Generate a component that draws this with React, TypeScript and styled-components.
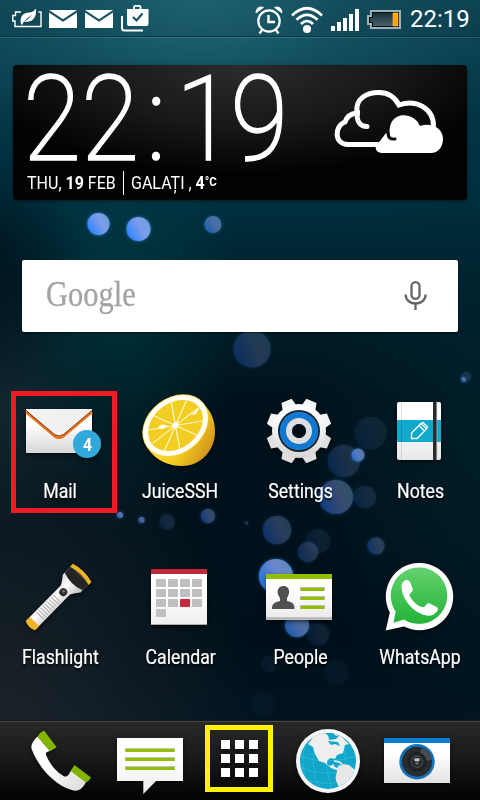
import React from "react";
import styled, { createGlobalStyle } from "styled-components";

const GlobalStyle = createGlobalStyle`
  html, body { margin: 0; padding: 0; background: #00131d; }
  * { box-sizing: border-box; }
  svg { display: block; overflow: visible; }
`;

const Screen = styled.div`
  position: relative;
  width: 480px;
  height: 800px;
  overflow: hidden;
  display: flex;
  flex-direction: column;
  color: #fff;
  font-family: Roboto, "Liberation Sans", sans-serif;
  background:
    radial-gradient(ellipse 330px 190px at 200px -10px, rgba(40, 120, 137, 0.8), rgba(30, 100, 116, 0.42) 50%, transparent),
    radial-gradient(ellipse 280px 400px at -20px 770px, rgba(42, 44, 48, 0.75), transparent),
    radial-gradient(ellipse 120px 130px at -30px 275px, rgba(0, 15, 25, 0.9), transparent),
    radial-gradient(ellipse 120px 230px at 120px 300px, rgba(0, 66, 72, 0.55), transparent),
    radial-gradient(ellipse 110px 130px at 0 400px, rgba(36, 58, 66, 0.5), transparent),
    radial-gradient(ellipse 200px 320px at 500px 420px, rgba(0, 40, 50, 0.6), transparent),
    linear-gradient(180deg, #0c4655 0, #043443 120px, #00303f 200px, #00202c 290px, #00121c 400px, #00101a 640px, #021420 720px);
`;

const Backdrop = styled.svg`
  position: absolute;
  inset: 0;
`;

const StatusBar = styled.header`
  position: relative;
  height: 37px;
  flex: none;
  display: flex;
  align-items: center;
  padding: 0 10px 0 12px;
  background: rgba(10, 35, 50, 0.16);
  border-bottom: 1px solid rgba(0, 30, 42, 0.45);
  box-shadow: 0 1px 0 rgba(120, 180, 190, 0.25);
`;

const StatusGroup = styled.div<{ $gap: number }>`
  display: flex;
  align-items: center;
  gap: ${(p) => p.$gap}px;
`;

const StatusTime = styled.time`
  font-size: 24px;
  line-height: 37px;
  width: 60px;
  margin: 3px 0 0 1px;
`;

const Spacer = styled.div`
  flex: 1;
`;

const ClockWidget = styled.section`
  position: relative;
  flex: none;
  display: flex;
  justify-content: space-between;
  height: 135px;
  margin: 28px 13px 0;
  padding: 0 24px 0 14px;
  border-radius: 4px;
  background:
    radial-gradient(ellipse 270px 110px at 50% 0, rgba(48, 48, 48, 0.9), rgba(34, 34, 34, 0.7) 55%, transparent),
    #020202;
  box-shadow: 0 1px 3px rgba(0, 0, 0, 0.5);
`;

const ClockColumn = styled.div`
  display: flex;
  flex-direction: column;
`;

const CloudSlot = styled.div`
  padding-top: 25px;
`;

const Digits = styled.div`
  display: flex;
  width: 280px;
  height: 105px;
  font-size: 118px;
  line-height: 110px;
  font-weight: 200;
  -webkit-text-stroke: 1.4px #fff;
  transform: scaleX(0.895);
  transform-origin: 0 50%;
`;

const Digit = styled.span<{ $shift: number }>`
  margin-left: ${(p) => p.$shift}px;
`;

const DateLine = styled.div`
  display: flex;
  align-items: center;
  height: 25px;
  font-size: 18px;
  white-space: nowrap;
`;

const DatePart = styled.span<{ $width: number; $scale: number }>`
  width: ${(p) => p.$width}px;
  transform: scaleX(${(p) => p.$scale});
  transform-origin: 0 50%;
`;

const Divider = styled.i`
  width: 1px;
  height: 24px;
  margin-right: 7px;
  background: #fff;
`;

const Unit = styled.small`
  font-size: 13px;
  font-weight: 700;
  vertical-align: 3px;
`;

const SearchBar = styled.section`
  position: relative;
  flex: none;
  display: flex;
  align-items: center;
  justify-content: space-between;
  height: 72px;
  margin: 60px 22px 0;
  padding: 0 30px 0 23px;
  border-radius: 2px;
  background: #fff;
  box-shadow: 0 1px 2px rgba(0, 0, 0, 0.6);
`;

const Wordmark = styled.span`
  font-family: "Liberation Serif", serif;
  font-size: 35px;
  line-height: 40px;
  color: #a3a3a3;
  -webkit-text-stroke: 0.3px #a3a3a3;
  margin: -2px 0 0 1px;
  transform: scaleX(0.87);
  transform-origin: 0 50%;
`;

const AppGrid = styled.main`
  position: relative;
  flex: none;
  display: grid;
  grid-template-columns: repeat(4, 120px);
  grid-template-rows: 166px 163px;
  margin-top: 59px;
`;

const AppCell = styled.div`
  position: relative;
  display: flex;
  flex-direction: column;
  align-items: center;
`;

const AppIcon = styled.svg`
  width: 80px;
  height: 80px;
  flex: none;
  filter: drop-shadow(0 2px 2px rgba(0, 0, 0, 0.55));
`;

const AppLabel = styled.span`
  margin: 8px 0 0 1px;
  font-size: 20px;
  line-height: 24px;
  white-space: nowrap;
  transform: scaleX(0.885);
  -webkit-text-stroke: 0.2px #fff;
  text-shadow: 0 2px 2px rgba(0, 0, 0, 0.8);
`;

const Marker = styled.i<{ $color: string; $inset: string }>`
  position: absolute;
  inset: ${(p) => p.$inset};
  border: 5px solid ${(p) => p.$color};
`;

const Dock = styled.footer`
  position: relative;
  flex: none;
  height: 80px;
  display: grid;
  grid-template-columns: repeat(5, 89px);
  padding-left: 15.5px;
  background: linear-gradient(#292929, #1b1b1b 45%, #050505 95%);
  box-shadow: inset 0 1px 0 #181818, inset 0 2px 0 #484545;
`;

type Dot = [x: number, y: number, r: number, opacity: number];

const dots: Dot[] = [
  [98.5, 224, 11, 1], [138.5, 229, 12, 1], [213, 224.5, 8.5, 0.6],
  [252, 349, 18.5, 0.32], [466, 377, 5, 0.22], [463.5, 379.5, 2.4, 0.6],
  [370.5, 433, 16, 0.14], [344, 461, 16, 0.26], [358, 455, 6.5, 0.72],
  [336, 497, 17, 0.52], [365, 497, 11, 0.2], [120, 515, 3, 0.7],
  [141.5, 520, 3, 0.6], [167, 522, 7.5, 0.2], [208, 516, 7, 0.5],
  [246.5, 523, 1.5, 0.4], [277, 530, 14, 0.4], [318, 541, 12, 0.13],
  [308, 552, 10, 0.32], [376, 546, 8.5, 0.38], [276, 576, 17, 0.85],
  [297, 625, 12, 0.65], [318, 634, 11, 0.15], [269, 664, 8, 0.08],
  [336, 672, 12, 0.06], [262, 704, 12, 0.04],
];

const Bokeh = () => (
  <Backdrop width="480" height="800" viewBox="0 0 480 800">
    <defs>
      <linearGradient id="dot" x1="0" y1="0.8" x2="1" y2="0.2">
        <stop offset="0" stopColor="#2484ff" />
        <stop offset="0.6" stopColor="#809bea" />
        <stop offset="1" stopColor="#68a2d8" />
      </linearGradient>
      <linearGradient id="dimDot" x1="0" y1="0.7" x2="1" y2="0.3">
        <stop offset="0" stopColor="#1c62e0" />
        <stop offset="0.6" stopColor="#6d80bd" />
        <stop offset="1" stopColor="#5c87a8" />
      </linearGradient>
      <filter id="glow" x="-50%" y="-50%" width="200%" height="200%">
        <feGaussianBlur stdDeviation="1.8" />
      </filter>
    </defs>
    {dots.map(([x, y, r, o]) => (
      <g key={`${x}-${y}`} opacity={o}>
        <circle cx={x} cy={y} r={r + 0.5} fill="#2d79d8" opacity="0.7" filter="url(#glow)" />
        <circle cx={x} cy={y} r={r} fill={o < 0.55 ? "url(#dimDot)" : "url(#dot)"} />
      </g>
    ))}
  </Backdrop>
);

const PaperGradient = ({ id, to = "#dcdcdc" }: { id: string; to?: string }) => (
  <linearGradient id={id} x1="0" y1="0" x2="0" y2="1">
    <stop offset="0.35" stopColor="#fff" />
    <stop offset="1" stopColor={to} />
  </linearGradient>
);

const PowerSaver = () => (
  <svg width="29" height="20" viewBox="0 0 29 20">
    <path d="M9 4H3.500v3.500H.8v5.500H3V18.500h26V4h-2.500" fill="none" stroke="#fff" strokeWidth="1.400" />
    <path d="M9 16.500c-2-8.500 3-12 8-12 3 0 5-1.500 7-4 1 8-3 15-12 13 4-2 6-4 8-7-4 4-8 5-9.500 10z" fill="#fff" />
  </svg>
);

const Envelope = () => (
  <svg width="28" height="18" viewBox="0 0 28 18">
    <g transform="translate(0 1)" fill="#fff">
      <path d="M0 0h28L14 9.300z" />
      <path d="M0 2.400 14 11.700 28 2.400V18H0z" />
    </g>
  </svg>
);

const UpdatedApps = () => (
  <svg width="28" height="27" viewBox="0 0 28 27">
    <path d="M1 11v12q0 2.500 2.500 2.500H22" fill="none" stroke="#fff" strokeWidth="2" />
    <path d="M13 4V2q0-1.200 1.200-1.200h4Q19.500.8 19.500 2v2" fill="none" stroke="#fff" strokeWidth="1.800" />
    <path d="M6 4h21.500v15q0 2-2 2H8q-2 0-2-2z" fill="#fff" />
    <path d="m12 12 3.500 3.500 6-7" fill="none" stroke="#1c5264" strokeWidth="2.200" />
  </svg>
);

const Alarm = () => (
  <svg width="28" height="28" viewBox="0 0 28 28" fill="none" stroke="#fff">
    <g transform="translate(0 2)">
      <circle cx="14" cy="15" r="10.700" strokeWidth="2.200" />
      <path d="M13.500 9v7H20" strokeWidth="2.400" />
      <path d="m7 24-2.500 3.500M21 24l2.500 3.500" strokeWidth="2.200" />
      <path d="M.8 7.500C-.5 3 5-1.500 9 1.500zM27.200 7.500C28.500 3 23-1.500 19 1.500z" fill="#fff" stroke="none" />
    </g>
  </svg>
);

const Wifi = () => (
  <svg width="32" height="28" viewBox="0 0 32 28" fill="none" stroke="#fff" strokeWidth="2.700">
    <g transform="translate(0 1.500)">
      <path d="M1 10Q16-4.500 31 10M5.500 14.300q10.500-10 21 0M10 18.500q6-6 12 0" />
      <circle cx="16" cy="23.500" r="4" fill="#fff" stroke="none" />
    </g>
  </svg>
);

const Signal = () => (
  <svg width="28" height="22" viewBox="0 0 28 22" fill="#fff">
    <path d="M0 17h4v5H0zM6 13h4v9H6zM12 9h4v13h-4zM18 5h4v17h-4zM24 0h4v22h-4z" transform="translate(0 2)" />
  </svg>
);

const Battery = () => (
  <svg width="34" height="19" viewBox="0 0 34 19">
    <defs>
      <linearGradient id="cell" x1="0" y1="0" x2="0" y2="1">
        <stop stopColor="#17313a" /><stop offset="1" stopColor="#49616a" />
      </linearGradient>
    </defs>
    <g transform="translate(0 1)">
      <path d="M3 0h31v19H3v-4H0V5h3z" fill="#9fb1b8" />
      <path d="M5 2h27v15H5v-4H2V7h3z" fill="#050b0e" />
      <path d="M6 3h20v13H6v-4H3V8h3z" fill="url(#cell)" />
      <path d="M26 3h5v13h-5z" fill="#ffa30a" stroke="#ffcc39" strokeWidth=".6" />
    </g>
  </svg>
);

const Clouds = () => (
  <svg width="108" height="63" viewBox="0 0 108 63">
    <path
      d="M43 54.500H13C-1 54.500-1 36 10 32c2-6 6-8.500 12-9C20 8 32 2.500 44 2.500c9 0 16 5 20 12.500C81 9 99 18 98.500 37"
      fill="none" stroke="#fff" strokeWidth="5"
    />
    <path d="M22.500 22C21 31 25 36.500 32 36.500" fill="none" stroke="#fff" strokeWidth="5" strokeLinecap="round" />
    <path d="M47 63c-8 0-8-9-2-12l6-8 4 3C51 21 78 20 85 36c10-4 23 1 23 13 0 8-5 14-12 14z" fill="#fff" />
    <path d="M53 43q0 7 7 6" fill="none" stroke="#080808" strokeWidth="3" strokeLinecap="round" />
  </svg>
);

const Microphone = () => (
  <svg width="24" height="30" viewBox="0 0 24 30" fill="none" stroke="#666" strokeWidth="2.300">
    <rect x="7.500" y="1.200" width="8" height="16.600" rx="4" />
    <path d="M1.600 13.500c0 12 20 12 20 0M11.500 22v7" strokeWidth="2.300" />
  </svg>
);

const MailIcon = () => (
  <AppIcon viewBox="0 0 80 80">
    <defs><PaperGradient id="mail" to="#d6d6d6" /></defs>
    <path d="M6 18h66v44H6z" fill="url(#mail)" />
    <path d="M6 18h66v2L42 43q-3.500 2.500-7 0L6 20z" fill="#f1f1f1" />
    <path d="m6 21 28.500 24q4.500 3.300 9 0L72 21" fill="none" stroke="#e8731a" strokeWidth="2.800" />
    <path d="m6 19.500 28.500 24q4.500 3 9 0L72 19.500" fill="none" stroke="#6b3511" strokeWidth=".9" />
    <circle cx="67" cy="53" r="14" fill="#31aadb" />
    <text x="67.500" y="59.700" textAnchor="middle" fontSize="19" fontWeight="700" fill="#fff" fontFamily="Roboto, sans-serif" textLength="9" lengthAdjust="spacingAndGlyphs">4</text>
  </AppIcon>
);

const JuiceIcon = () => (
  <AppIcon viewBox="0 0 80 80">
    <defs>
      <linearGradient id="peel" x1="0.2" y1="0.4" x2="0.9" y2="0.8">
        <stop stopColor="#ffe14a" /><stop offset="0.6" stopColor="#f3cb22" /><stop offset="1" stopColor="#d2951a" />
      </linearGradient>
    </defs>
    <path d="M3.500 44C5 62 22 75 42 75c19 0 33-16 33-34C75 23 65 9 48 6z" fill="url(#peel)" />
    <g transform="translate(35.500 34.500) rotate(-38)">
      <ellipse rx="36" ry="28" fill="#f2cf2e" />
      <ellipse rx="35.300" ry="27.300" fill="#fffef2" />
      <ellipse rx="30" ry="22.500" fill="#f2cd22" />
      <path d="M-29 0h58M-24-13 24 13M-24 13 24-13M-11-21 11 21M-11 21 11-21" stroke="#fff9c8" strokeWidth="1.200" />
      <circle r="3" fill="#fffdf0" />
    </g>
    <path d="M18 37q3-6 10-2l-5 3zM51 24l9-8-4 7z" fill="#fff" />
  </AppIcon>
);

const toothAngles = [22.5, 67.5, 112.5, 157.5, 202.5, 247.5, 292.5, 337.5];

const SettingsIcon = () => (
  <AppIcon viewBox="0 0 80 80">
    <defs>
      <linearGradient id="gear" gradientUnits="userSpaceOnUse" x1="0" y1="-32" x2="0" y2="32">
        <stop offset="0.2" stopColor="#fff" /><stop offset="1" stopColor="#d2d2d2" />
      </linearGradient>
    </defs>
    <g transform="translate(39 40)">
      {toothAngles.map((a) => (
        <path key={a} d="M-7.500-24-5.500-32.500h11L7.500-24z" fill={a > 90 && a < 270 ? "#dfdfdf" : "#f4f4f4"} transform={`rotate(${a})`} />
      ))}
      <circle r="27" fill="url(#gear)" />
      <circle r="21" fill="#1b1f24" />
      <circle r="19.300" fill="#1379d0" />
      <circle r="10" fill="none" stroke="#dedede" strokeWidth="6" />
      <circle r="7" fill="#020d15" />
    </g>
  </AppIcon>
);

const NotesIcon = () => (
  <AppIcon viewBox="0 0 80 80">
    <defs><PaperGradient id="notes" to="#e8e8e8" /></defs>
    <rect x="17" y="11" width="44" height="58" rx="2" fill="url(#notes)" />
    <path d="M17 29h44v22H17z" fill="#12a8cb" />
    <path d="M21.500 11v58" stroke="#000" strokeOpacity=".12" />
    <path d="M53 11h3.700v58H53z" fill="#2b2b2b" />
    <path d="M57 11v58" stroke="#ccc" strokeOpacity=".5" />
    <path d="M31.500 47.500V42L41 32.500l5.500 5.500-9.500 9.500zM39 34.500l5.500 5.500M41 32.500l2-1 4.500 4.500-1 2" fill="none" stroke="#fff" strokeWidth="1.300" />
  </AppIcon>
);

const FlashlightIcon = () => (
  <AppIcon viewBox="0 0 80 80">
    <defs>
      <linearGradient id="tube" x1="0" y1="0" x2="1" y2="0">
        <stop stopColor="#dcdcdc" /><stop offset="0.4" stopColor="#fff" /><stop offset="1" stopColor="#bdbdbd" />
      </linearGradient>
    </defs>
    <g transform="translate(11 68) rotate(44.500)">
      <path d="M-6.500 0v-49q-1-3-6-9v-12h25v12q-5 6-6 9V0z" fill="url(#tube)" />
      <path d="M-6.500-5h13v6q-6.500 3-13 0z" fill="#efb323" />
      <path d="M-12.500-70h25v9q-12.500 5-25 0z" fill="#242424" />
      <path d="M-13-73q13-4 26 0v4q-13-4-26 0z" fill="#efb323" />
      <path d="M-5-13H5M-5-16H5M-5-19H5M-5-22H5M-5-25H5M-5-28H5M-5-31H5M-5-34H5M-5-37H5" stroke="#bababa" strokeWidth="1.300" />
      <circle cy="-46" r="4" fill="#2f3133" />
      <circle cx="-.5" cy="-47" r="1.400" fill="#777" />
    </g>
  </AppIcon>
);

const calendarDays = Array.from({ length: 13 }, (_, i) => i);

const CalendarIcon = () => (
  <AppIcon viewBox="0 0 80 80">
    <defs><PaperGradient id="calendar" to="#efefef" /></defs>
    <path d="M11 12h56v56H11z" fill="url(#calendar)" />
    <path d="M11 12h56v5H11z" fill="#c02739" />
    <path d="M11 67.500h56" stroke="#aaa" />
    {calendarDays.map((i) => (
      <rect key={i} x={16 + (i % 4) * 12} y={22 + Math.floor(i / 4) * 10} width="10" height="8" rx="1" fill={i === 10 ? "#c32b3c" : "#bfbfbf"} />
    ))}
  </AppIcon>
);

const PeopleIcon = () => (
  <AppIcon viewBox="0 0 80 80">
    <defs><PaperGradient id="people" to="#e9e9e9" /></defs>
    <path d="M6 17h66v46H6z" fill="url(#people)" />
    <path d="M6 17h66v5H6z" fill="#92c000" />
    <path d="M6 61.500h66" stroke="#b5b5b5" strokeWidth="2.400" />
    <path d="M12 52c0-6 3-6.500 8-8v-3c-4-5-3-12 3.500-12s7 7 3.500 12v3c5 1.500 7.500 2 7.500 8z" fill="#505050" />
    <path d="M40 30h25v4H40zM40 39h25v4H40zM40 48h25v4H40z" fill="#b9bdae" />
    <path d="M41 31h23v3H41zM41 40h23v3H41zM41 49h23v3H41z" fill="#92c000" />
  </AppIcon>
);

const WhatsAppIcon = () => (
  <AppIcon viewBox="0 0 80 80">
    <defs>
      <linearGradient id="chat" x1="0" y1="0" x2="0" y2="1">
        <stop stopColor="#64d26e" /><stop offset="1" stopColor="#22b338" />
      </linearGradient>
    </defs>
    <path d="M5.700 73.500 9.800 55.500A33.700 33.700 0 1 1 24 69.500z" fill="#fbfbfb" />
    <path d="M13.500 65.800 15.700 54.500A28.200 28.200 0 1 1 24 62.500z" fill="url(#chat)" />
    <path d="M22 30c0-4 4-7 6.500-6s3 4 4.500 8-4 5-3 7c3 6 7 10 13 12 3 1 4-5 7-4l7.500 4c3 2-2 8-7 8.500C37 60 22 44 22 30z" fill="#fff" transform="translate(-.5 -.8)" />
  </AppIcon>
);

const PhoneIcon = () => (
  <AppIcon viewBox="0 0 80 80">
    <defs>
      <linearGradient id="handset" x1="0" y1="0" x2="1" y2="1">
        <stop offset="0.4" stopColor="#fff" /><stop offset="1" stopColor="#dadada" />
      </linearGradient>
    </defs>
    <path d="M17.500 16.500 30 31c-4 1-5 2-3.500 5 4 9 10 16 17 20 3 1.500 5 0 7.500-5.500L66 62c-4 8-9 10-14 8-18-5-34-24-40-40-2-5 1-9 5.500-13.500z" fill="url(#handset)" />
    <path d="m24.300 10.700 12.400 16.600L30 31.200 17.500 16.500q3-5 6.800-5.800zM54.500 45 71 57.500q-2 3.500-5 5L50.500 51z" fill="#83b400" />
  </AppIcon>
);

const MessagesIcon = () => (
  <AppIcon viewBox="0 0 80 80">
    <defs><PaperGradient id="message" to="#ececec" /></defs>
    <path d="M8 18h66v43H47L34.300 74V61H8z" fill="url(#message)" />
    <path d="M16 28h50v4H16zM16 37h50v4H16zM16 46h50v4H16z" fill="#c3c6bd" />
    <path d="M16.500 29h49v3h-49zM16.500 38h49v3h-49zM16.500 47h49v3h-49z" fill="#92c000" />
  </AppIcon>
);

const AllAppsIcon = () => (
  <AppIcon viewBox="0 0 80 80">
    {[20, 34, 48].map((y) => [23, 37, 51].map((x) => <rect key={`${x}-${y}`} x={x} y={y} width="9" height="9" fill="#fff" />))}
  </AppIcon>
);

const GlobeIcon = () => (
  <AppIcon viewBox="0 0 80 80">
    <defs><clipPath id="sea"><circle cx="41" cy="41" r="28" /></clipPath></defs>
    <circle cx="41" cy="41" r="32" fill="#f5f5f5" />
    <circle cx="41" cy="41" r="28" fill="#10a5c9" />
    <g clipPath="url(#sea)">
      <path d="M12 36q28 10 58 0M12 47q28 12 58 1M14 58q26 11 54 0M33 12q-14 28 0 58M44 12q-10 30 2 58M23 15Q8 42 24 68M56 18q6 20-2 48" fill="none" stroke="#2db8d6" strokeWidth=".9" />
      <path d="m21 24 6-8 8-5 6 3 1 6 7-1 4-4 9 9-4 1-2 8-6 2-2 4c-4-2-8 0-8 4 0 3 4 4 6 1l2 3 5 2-1 2-8-3-6-5-6-2-4-7-2-7z" fill="#eee" />
      <path d="m38 13 10-1 3 3-6 4zM41 21l10 1 2 4-5-2-4 1z" fill="#10a5c9" />
      <path d="m45 12 6-1 4 3-6 2z" fill="#eee" />
      <path d="m51 46 5-2 6 1 6 5 4 5-9 15-12 1c2-7-4-10-2-15z" fill="#e8e8e8" />
      <path d="M47 41q5 0 8 3" fill="none" stroke="#eee" strokeWidth="1.500" />
    </g>
  </AppIcon>
);

const CameraIcon = () => (
  <AppIcon viewBox="0 0 80 80">
    <defs><PaperGradient id="camera" to="#e2e2e2" /></defs>
    <path d="M8 18h66v45H8z" fill="url(#camera)" />
    <path d="M8 18h66v5H8z" fill="#0c7ed2" />
    <circle cx="41" cy="41.700" r="17.700" fill="#1473bb" />
    <circle cx="41" cy="41.700" r="15" fill="#292c2f" />
    <path d="M41 41.700 46 28q8 4 10 12z" fill="#4b4d50" />
    <circle cx="41" cy="41.700" r="9" fill="#242629" stroke="#17191b" strokeWidth="1" />
    <circle cx="41" cy="41.700" r="5.500" fill="#202226" stroke="#55575b" strokeWidth="1" />
    <ellipse cx="41" cy="39.800" rx="3" ry="1.800" fill="#b8bbc0" />
    <ellipse cx="41" cy="43.500" rx="2" ry="1" fill="#74777c" />
  </AppIcon>
);

const apps = [
  { name: "Mail", Icon: MailIcon, marked: true },
  { name: "JuiceSSH", Icon: JuiceIcon },
  { name: "Settings", Icon: SettingsIcon },
  { name: "Notes", Icon: NotesIcon },
  { name: "Flashlight", Icon: FlashlightIcon },
  { name: "Calendar", Icon: CalendarIcon },
  { name: "People", Icon: PeopleIcon },
  { name: "WhatsApp", Icon: WhatsAppIcon },
];

export default function App() {
  return (
    <>
      <GlobalStyle />
      <Screen>
        <Bokeh />
        <StatusBar>
          <StatusGroup $gap={8}>
            <PowerSaver />
            <Envelope />
            <Envelope />
            <UpdatedApps />
          </StatusGroup>
          <Spacer />
          <StatusGroup $gap={8}>
            <Alarm />
            <Wifi />
            <Signal />
            <Battery />
            <StatusTime>22:19</StatusTime>
          </StatusGroup>
        </StatusBar>
        <ClockWidget>
          <ClockColumn>
            <Digits>
              <Digit $shift={-4.6}>2</Digit>
              <Digit $shift={0}>2</Digit>
              <Digit $shift={8}>:</Digit>
              <Digit $shift={10.5}>1</Digit>
              <Digit $shift={-4}>9</Digit>
            </Digits>
            <DateLine>
              <DatePart $width={96} $scale={0.89}>THU, <b>19</b> FEB</DatePart>
              <Divider />
              <DatePart $width={90} $scale={0.89}>GALAȚI , <b>4</b><Unit>°C</Unit></DatePart>
            </DateLine>
          </ClockColumn>
          <CloudSlot>
            <Clouds />
          </CloudSlot>
        </ClockWidget>
        <SearchBar>
          <Wordmark>Google</Wordmark>
          <Microphone />
        </SearchBar>
        <AppGrid>
          {apps.map(({ name, Icon, marked }) => (
            <AppCell key={name}>
              <Icon />
              <AppLabel>{name}</AppLabel>
              {marked && <Marker $color="#ed1c24" $inset="0 3px 44px 11px" />}
            </AppCell>
          ))}
        </AppGrid>
        <Dock>
          <AppCell><PhoneIcon /></AppCell>
          <AppCell><MessagesIcon /></AppCell>
          <AppCell>
            <AllAppsIcon />
            <Marker $color="#fff200" $inset="5px 9.5px 8px 11.5px" />
          </AppCell>
          <AppCell><GlobeIcon /></AppCell>
          <AppCell><CameraIcon /></AppCell>
        </Dock>
      </Screen>
    </>
  );
}
